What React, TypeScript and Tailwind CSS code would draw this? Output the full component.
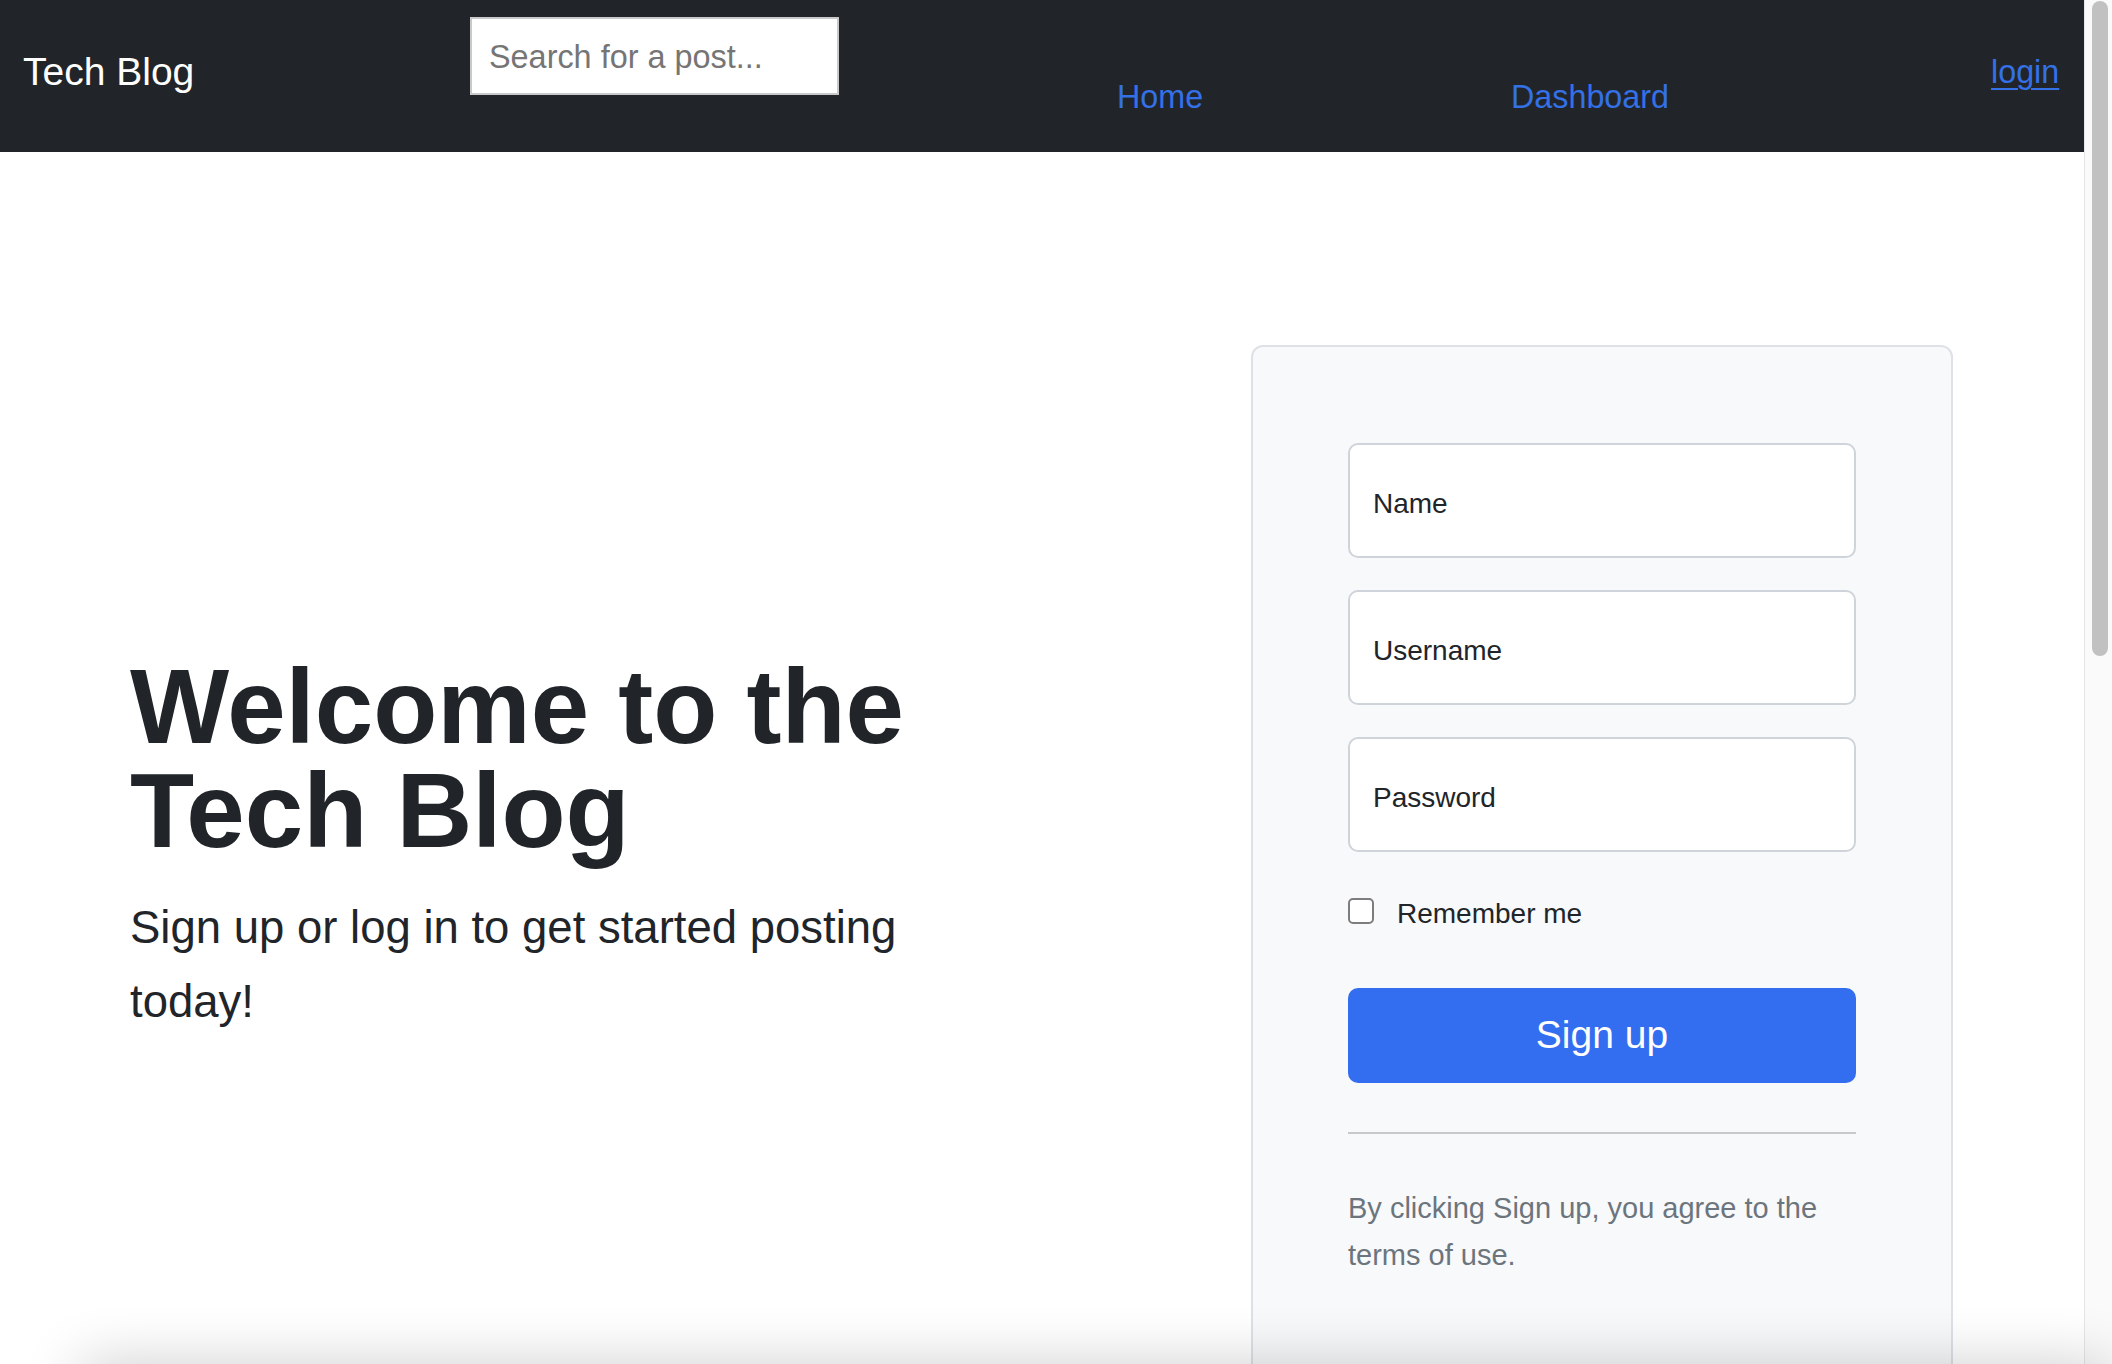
const navLinks = [
  { label: "Home", width: "w-[394px]" },
  { label: "Dashboard", width: "w-[480px]" },
];

const fields = ["Name", "Username", "Password"];

const App = () => {
  return (
    <div className="relative flex h-[1364px] w-full overflow-hidden bg-white font-['Liberation_Sans',Arial,sans-serif] text-[#212529]">
      <div className="flex min-w-0 flex-1 flex-col">
        {/* Navbar */}
        <nav className="flex h-[152px] shrink-0 items-start bg-[#212529] pl-[23px]">
          <a className="mt-[49px] w-[447px] shrink-0 text-[39px] leading-[46px] text-white">
            Tech Blog
          </a>
          <input
            type="text"
            placeholder="Search for a post..."
            className="mt-[17px] h-[78px] w-[369px] shrink-0 border-2 border-[#c9c9c9] bg-white pl-[17px] pt-[2px] text-[32.4px] outline-none placeholder:text-[#757575]"
          />
          <div className="ml-[278px] flex">
            {navLinks.map((link) => (
              <div key={link.label} className={`${link.width} shrink-0`}>
                <a className="mt-[77px] block text-[32.3px] leading-[40px] text-[#3470e6]">
                  {link.label}
                </a>
              </div>
            ))}
          </div>
          <a className="mt-[52px] text-[32.3px] leading-[40px] text-[#3470e6] underline decoration-2 underline-offset-[5px]">
            login
          </a>
        </nav>

        {/* Hero */}
        <section className="mx-auto flex w-[1920px] items-start pt-[193px]">
          <div className="w-[1120px] shrink-0 px-[48px] pt-[310px]">
            <h1 className="mb-[28px] text-[105px] font-bold leading-[104px]">
              Welcome to the
              <br />
              Tech Blog
            </h1>
            <p className="max-w-[853px] text-[45.5px] leading-[74px]">
              Sign up or log in to get started posting today!
            </p>
          </div>

          <div className="w-[800px] shrink-0 px-[49px]">
            <form className="rounded-[12px] border-2 border-[#dee2e6] bg-[#f8f9fa] px-[95px] py-[96px]">
              <div className="flex flex-col gap-[32px]">
                {fields.map((field) => (
                  <input
                    key={field}
                    type={field === "Password" ? "password" : "text"}
                    placeholder={field}
                    className="h-[115px] w-full rounded-[10px] border-2 border-[#ced4da] bg-white pl-[23px] pt-[7px] text-[28px] outline-none placeholder:text-[#212529]"
                  />
                ))}
              </div>

              <label className="mt-[46px] flex h-[26px] items-center">
                <input
                  type="checkbox"
                  className="h-[26px] w-[26px] shrink-0 appearance-none rounded-[5px] border-2 border-[#7d7d7d] bg-white"
                />
                <span className="ml-[23px] pt-[5px] text-[28px] leading-[26px]">
                  Remember me
                </span>
              </label>

              <button
                type="button"
                className="mt-[64px] h-[95px] w-full rounded-[10px] bg-[#346ef0] text-[39px] text-white"
              >
                Sign up
              </button>

              <hr className="mt-[49px] border-t-2 border-[#c8c9cb]" />

              <p className="mt-[51px] text-[29px] leading-[47px] text-[#6c757d]">
                By clicking Sign up, you agree to the terms of use.
              </p>
            </form>
          </div>
        </section>
      </div>

      {/* Scrollbar */}
      <div className="w-[28px] shrink-0 border-l border-[#e6e6e6] bg-[#fafafa] pl-[7px] pr-[4px] pt-[1px]">
        <div className="h-[655px] w-[16px] rounded-full bg-[#c1c1c1]" />
      </div>

      {/* Bottom shade */}
      <div className="pointer-events-none absolute left-[80px] right-0 top-[1364px] h-[60px] bg-white shadow-[0_0_60px_rgba(0,0,0,0.2)]" />
    </div>
  );
};

export default App;
